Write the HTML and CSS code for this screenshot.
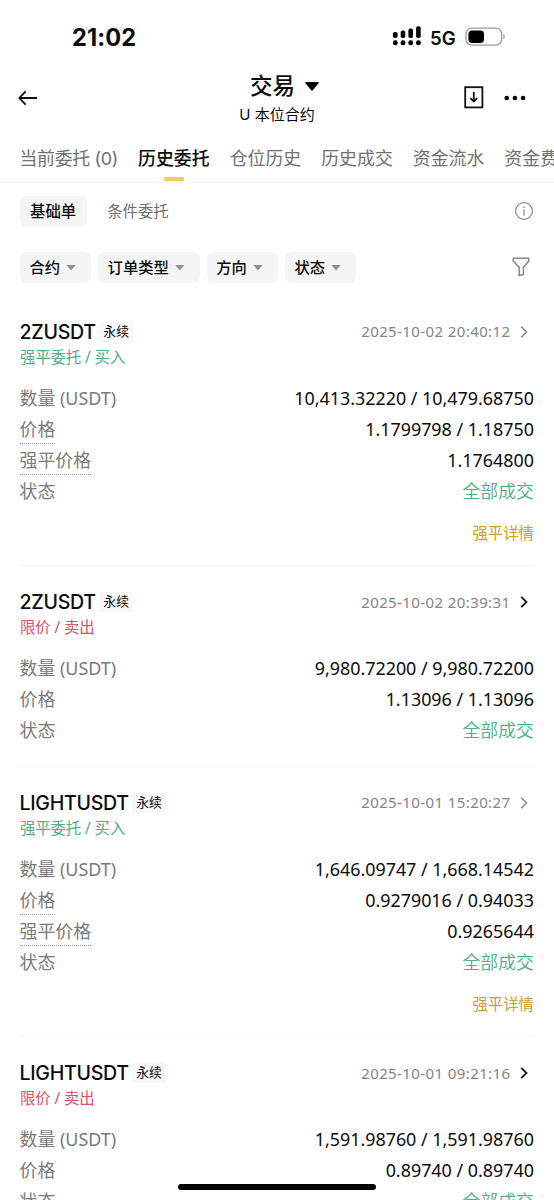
FILE: index.html
```html
<!DOCTYPE html>
<html lang="zh-CN">
<head>
<meta charset="utf-8">
<title>交易</title>
<link rel="stylesheet" href="styles.css">
</head>
<body>
<div class="screen">
  <div class="status">
    <span class="clock">21:02</span>
    <div class="status-right">
      <svg class="signal" width="30" height="20" viewBox="0 0 30 20">
        <rect x="1" y="6" width="4.6" height="6" rx="1.8"/><rect x="8.7" y="4.6" width="4.6" height="7.4" rx="1.8"/><rect x="16.4" y="2.6" width="4.6" height="9.4" rx="1.8"/><rect x="24.1" y="0.2" width="4.6" height="11.8" rx="1.8"/>
        <rect x="1" y="14.3" width="4.6" height="4.9" rx="2"/><rect x="8.7" y="14.3" width="4.6" height="4.9" rx="2"/><rect x="16.4" y="14.3" width="4.6" height="4.9" rx="2"/><rect x="24.1" y="14.3" width="4.6" height="4.9" rx="2"/>
      </svg>
      <span class="net">5G</span>
      <svg class="battery" width="41" height="20" viewBox="0 0 41 20">
        <rect x="1" y="1.2" width="35.6" height="17" rx="5.6" fill="none" stroke="#999" stroke-width="1.3"/>
        <rect x="3.4" y="3.5" width="15.6" height="12.4" rx="3.6"/>
        <path d="M38.4 7v5.4c1.8-.7 1.8-4.7 0-5.4z" fill="#999"/>
      </svg>
    </div>
  </div>
  <header class="header">
    <svg class="back" width="20" height="16" viewBox="0 0 20 16" fill="none" stroke="#111" stroke-width="1.8"><path d="M19 8H1.6M7.6 1.4 1.4 8l6.2 6.6"/></svg>
    <div class="heading">
      <div class="title">交易<svg width="14" height="9" viewBox="0 0 14 9"><path d="M.8 0h12.4q.9.5.3 1.3L8 7.9q-1 1-2 0L.5 1.3Q-.1.5.8 0z"/></svg></div>
      <div class="subtitle">U 本位合约</div>
    </div>
    <div class="tools">
      <svg width="20" height="23" viewBox="0 0 20 23" fill="none" stroke="#111" stroke-width="1.8"><rect x="1.2" y="1.2" width="17.2" height="20.2"/><path d="M9.8 6v9.6M6.4 12.2l3.4 3.4 3.4-3.4"/></svg>
      <svg class="more" width="22" height="6" viewBox="0 0 22 6"><circle cx="2.7" cy="3" r="2.3"/><circle cx="10.9" cy="3" r="2.3"/><circle cx="19.1" cy="3" r="2.3"/></svg>
    </div>
  </header>
  <nav class="tabs">
    <span class="tab tab-count">当前委托 (0)</span><span class="tab active">历史委托</span><span class="tab">仓位历史</span><span class="tab">历史成交</span><span class="tab">资金流水</span><span class="tab">资金费用</span>
  </nav>
  <div class="kinds">
    <span class="kind selected">基础单</span><span class="kind">条件委托</span>
    <svg class="info" width="20" height="20" viewBox="0 0 20 20" fill="none" stroke="#888" stroke-width="1.2"><circle cx="10" cy="10" r="8.4"/><path d="M10 8.5v6M10 5.4v1.5"/></svg>
  </div>
  <div class="filters">
    <span class="filter">合约<i class="caret"></i></span><span class="filter">订单类型<i class="caret"></i></span><span class="filter">方向<i class="caret"></i></span><span class="filter">状态<i class="caret"></i></span>
    <svg class="funnel" width="18" height="20" viewBox="0 0 18 20" fill="none" stroke="#888" stroke-width="1.5" stroke-linejoin="round"><path d="M1.2 1.2h15.6v2.7l-5.4 6.4v7.2l-4.2 1V10.3L1.2 3.9z"/></svg>
  </div>
  <main class="orders">
    <section class="order">
      <div class="top"><span class="pair">2ZUSDT</span><span class="perp">永续</span><span class="time">2025-10-02 20:40:12</span><svg class="chev muted" width="8" height="12" viewBox="0 0 8 12"><path d="m1.2.8 5.3 5.2-5.3 5.2"/></svg></div>
      <div class="side buy">强平委托 / 买入</div>
      <div class="row"><span class="label">数量 (USDT)</span><span class="value">10,413.32220 / 10,479.68750</span></div>
      <div class="row"><span class="label hint">价格</span><span class="value">1.1799798 / 1.18750</span></div>
      <div class="row"><span class="label hint">强平价格</span><span class="value">1.1764800</span></div>
      <div class="row"><span class="label">状态</span><span class="value done">全部成交</span></div>
      <div class="action">强平详情</div>
    </section>
    <section class="order">
      <div class="top"><span class="pair">2ZUSDT</span><span class="perp">永续</span><span class="time">2025-10-02 20:39:31</span><svg class="chev" width="8" height="12" viewBox="0 0 8 12"><path d="m1.2.8 5.3 5.2-5.3 5.2"/></svg></div>
      <div class="side sell">限价 / 卖出</div>
      <div class="row"><span class="label">数量 (USDT)</span><span class="value">9,980.72200 / 9,980.72200</span></div>
      <div class="row"><span class="label">价格</span><span class="value">1.13096 / 1.13096</span></div>
      <div class="row"><span class="label">状态</span><span class="value done">全部成交</span></div>
    </section>
    <section class="order">
      <div class="top"><span class="pair">LIGHTUSDT</span><span class="perp">永续</span><span class="time">2025-10-01 15:20:27</span><svg class="chev muted" width="8" height="12" viewBox="0 0 8 12"><path d="m1.2.8 5.3 5.2-5.3 5.2"/></svg></div>
      <div class="side buy">强平委托 / 买入</div>
      <div class="row"><span class="label">数量 (USDT)</span><span class="value">1,646.09747 / 1,668.14542</span></div>
      <div class="row"><span class="label hint">价格</span><span class="value">0.9279016 / 0.94033</span></div>
      <div class="row"><span class="label hint">强平价格</span><span class="value">0.9265644</span></div>
      <div class="row"><span class="label">状态</span><span class="value done">全部成交</span></div>
      <div class="action">强平详情</div>
    </section>
    <section class="order">
      <div class="top"><span class="pair">LIGHTUSDT</span><span class="perp">永续</span><span class="time">2025-10-01 09:21:16</span><svg class="chev" width="8" height="12" viewBox="0 0 8 12"><path d="m1.2.8 5.3 5.2-5.3 5.2"/></svg></div>
      <div class="side sell">限价 / 卖出</div>
      <div class="row"><span class="label">数量 (USDT)</span><span class="value">1,591.98760 / 1,591.98760</span></div>
      <div class="row"><span class="label">价格</span><span class="value">0.89740 / 0.89740</span></div>
      <div class="row"><span class="label">状态</span><span class="value done">全部成交</span></div>
    </section>
  </main>
  <div class="home-bar"></div>
</div>
</body>
</html>
```
FILE: styles.css
```css
* { box-sizing: border-box; }
body { margin: 0; background: #fefefe; color: #0c0c0c; font-family: Inter, "Noto Sans CJK SC", sans-serif; }
svg { display: block; flex: none; }
.screen { position: relative; width: 554px; height: 1200px; overflow: hidden; display: flex; flex-direction: column; }
.screen > * { flex: none; }

.status { height: 70px; padding: 5px 48px 0 72px; display: flex; align-items: center; justify-content: space-between; }
.clock { font-size: 23.6px; font-weight: 700; letter-spacing: .1px; }
.status-right { display: flex; align-items: center; }
.signal { margin-right: 8px; margin-top: -4px; }
.net { font-size: 18.6px; font-weight: 600; width: 26px; margin-right: 9px; padding-top: 1px; }
.battery { margin-top: -1px; }

.header { height: 65px; padding: 0 28px 0 18px; display: grid; grid-template-columns: 120px 1fr 110px; align-items: start; }
.back { margin-top: 20px; }
.heading { text-align: center; }
.title { height: 32px; line-height: 32px; padding-left: 15px; font-size: 22.5px; font-weight: 500; display: flex; justify-content: center; align-items: center; gap: 10px; }
.subtitle { height: 26px; line-height: 26px; font-size: 15px; }
.tools { display: flex; justify-content: flex-end; align-items: center; gap: 20px; margin-top: 16px; }

.tabs { height: 48px; padding: 0 0 2px 19.5px; display: flex; gap: 20px; align-items: stretch; border-bottom: 1px solid #f4f4f4; overflow: hidden; }
.tab { position: relative; flex: none; font-size: 17.9px; line-height: 47px; color: #707070; white-space: nowrap; }
.tab-count { letter-spacing: -.3px; }
.active { color: #0c0c0c; font-weight: 500; }
.active::after { content: ""; position: absolute; left: 26px; bottom: -1px; width: 20px; height: 4px; border-radius: 1px; background: #efcf55; }

.kinds { height: 58px; padding: 13px 20px 0; display: flex; align-items: flex-start; }
.kind { height: 30px; line-height: 31px; padding: 0 10px; font-size: 15.4px; color: #707070; }
.selected { background: #f5f5f5; border-radius: 6px; color: #0c0c0c; font-weight: 500; padding-right: 11px; margin-right: 10px; }
.info { margin: 5px 0 0 auto; }

.filters { height: 54.5px; padding: 11px 24px 0 20px; display: flex; align-items: flex-start; gap: 7px; }
.filter { height: 31px; padding: 0 15px 3px 9.5px; display: flex; align-items: center; gap: 6px; font-size: 15.3px; font-weight: 500; background: #f5f5f5; border-radius: 7px; }
.caret { width: 10px; height: 6px; margin-top: 3px; background: #909090; clip-path: polygon(0 0, 100% 0, 50% 100%); }
.funnel { margin: 5px 0 0 auto; }

.order { margin: 0 20px; padding: 23px 0 19.5px; border-bottom: 1px solid #f6f6f6; }
.top { height: 26px; display: flex; align-items: center; }
.pair { font-size: 19.6px; font-weight: 500; letter-spacing: -.3px; margin-left: -.5px; }
.perp { height: 20px; line-height: 20px; margin-left: 3.5px; padding: 0 4px; font-size: 12.8px; background: #f8f8f8; border-radius: 3px; }
.time { margin-left: auto; margin-top: -1px; font-family: "Noto Sans", sans-serif; font-size: 15px; letter-spacing: .4px; color: #858585; }
.chev { margin: 0 6px 0 9.5px; fill: none; stroke: #151515; stroke-width: 1.8; }
.muted { stroke: #888; stroke-width: 1.5; }
.side { height: 25px; line-height: 25px; margin-bottom: 13px; font-family: "Noto Sans", "Noto Sans CJK SC", sans-serif; font-size: 15.4px; letter-spacing: -.1px; }
.buy, .done { color: #4fae87; }
.sell { color: #d9536a; }
.row { height: 31px; display: flex; justify-content: space-between; }
.label { height: 30px; line-height: 30px; margin-left: -.5px; font-family: "Noto Sans", "Noto Sans CJK SC", sans-serif; font-size: 17.9px; color: #7a7a7a; }
.hint { border-bottom: 1px dotted #999; }
.value { line-height: 31px; font-family: "Noto Sans", "Noto Sans CJK SC", sans-serif; font-size: 17.9px; }
.value.done { font-weight: 350; }
.action { height: 39px; line-height: 54px; text-align: right; font-size: 15.4px; color: #cc9e2d; }

.home-bar { position: absolute; left: 178px; bottom: 10px; width: 198px; height: 6px; border-radius: 3px; background: #000; }
```
